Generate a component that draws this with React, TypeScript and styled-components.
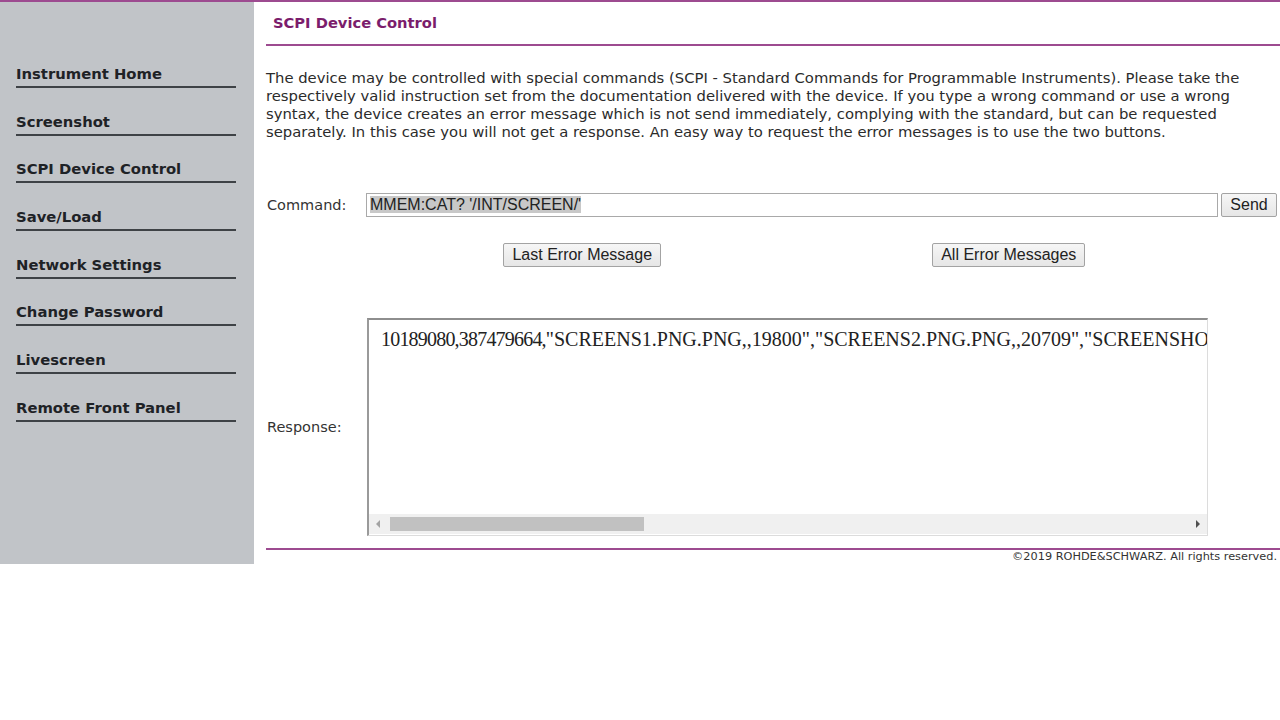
import React from "react"
import styled, { createGlobalStyle } from "styled-components"

const purple = "#9d4b90"

const GlobalStyle = createGlobalStyle`
  html, body {
    margin: 0;
    padding: 0;
    background: #ffffff;
  }
  body {
    font-family: "DejaVu Sans", Verdana, sans-serif;
    color: #2f2f2f;
  }
`

const Page = styled.div`
  display: flex;
  border-top: 2px solid ${purple};
`

const Sidebar = styled.nav`
  width: 254px;
  flex-shrink: 0;
  background: #c1c4c8;
  padding-top: 63px;
  box-sizing: border-box;
`

const NavItem = styled.a`
  display: block;
  width: 220px;
  margin-left: 16px;
  margin-bottom: 24.7px;
  padding-bottom: 3px;
  border-bottom: 2px solid #3e4246;
  font-size: 14.8px;
  line-height: 18px;
  font-weight: bold;
  color: #1e2226;
  text-decoration: none;
  white-space: nowrap;
`

const Main = styled.main`
  flex: 1;
  padding-left: 12px;
`

const Title = styled.h1`
  margin: 0;
  height: 44px;
  box-sizing: border-box;
  padding: 12px 0 0 7px;
  border-bottom: 2px solid ${purple};
  font-size: 14.7px;
  line-height: 18px;
  font-weight: bold;
  color: #7b1d6c;
`

const Intro = styled.p`
  margin: 23px 0 0;
  padding-right: 20px;
  font-size: 14.8px;
  line-height: 18px;
  color: #2b2b2b;
`

const CommandRow = styled.div`
  display: grid;
  grid-template-columns: 100px 1fr auto;
  align-items: center;
  margin-top: 52px;
  padding-right: 3px;
`

const Label = styled.span`
  padding-left: 1px;
  font-size: 14.5px;
  color: #333;
`

const Field = styled.div`
  height: 24px;
  box-sizing: border-box;
  border: 1px solid #a9a9a9;
  background: #fff;
  padding: 1px 3px;
  font-family: "Liberation Sans", Arial, sans-serif;
  font-size: 16px;
  line-height: 20px;
  color: #222;
  white-space: nowrap;
  overflow: hidden;
`

const Selected = styled.span`
  background: #c8c8c8;
`

const Button = styled.button`
  height: 24px;
  padding: 0 8px;
  border: 1px solid #a3a3a3;
  border-radius: 2px;
  background: linear-gradient(#f6f6f6, #e6e6e6);
  font-family: "Liberation Sans", Arial, sans-serif;
  font-size: 16px;
  color: #222;
  cursor: pointer;
`

const SendButton = styled(Button)`
  margin-left: 3px;
  width: 56px;
  padding: 0;
`

const ErrorButtons = styled.div`
  display: grid;
  grid-template-columns: 1fr 1fr;
  justify-items: center;
  margin-top: 26px;
  padding: 0 58px 0 103px;
`

const ResponseRow = styled.div`
  display: grid;
  grid-template-columns: 101px 841px;
  align-items: center;
  margin-top: 51px;
`

const ResponseBox = styled.div`
  height: 218px;
  box-sizing: border-box;
  display: flex;
  flex-direction: column;
  border-style: solid;
  border-width: 2px 1px 1px 2px;
  border-color: #8e8e8e #dcdcdc #dcdcdc #9a9a9a;
  background: #fff;
`

const ResponseText = styled.div`
  flex: 1;
  overflow: hidden;
  white-space: nowrap;
  padding: 8px 0 0 12px;
  font-family: "Liberation Serif", "Times New Roman", serif;
  font-size: 20px;
  line-height: 22px;
  color: #222;
`

const Digits = styled.span`
  letter-spacing: -0.8px;
`

const ScrollBar = styled.div`
  height: 20px;
  margin-bottom: 1px;
  display: flex;
  align-items: center;
  background: #f0f0f0;
`

const Arrow = styled.span<{ $dir: "left" | "right"; $active?: boolean }>`
  width: 18px;
  height: 20px;
  display: flex;
  align-items: center;
  justify-content: center;
  &::before {
    content: "";
    border-top: 4px solid transparent;
    border-bottom: 4px solid transparent;
    ${p =>
      p.$dir === "left"
        ? `border-right: 4px solid ${p.$active ? "#505050" : "#a3a3a3"};`
        : `border-left: 4px solid ${p.$active ? "#505050" : "#a3a3a3"};`}
  }
`

const Track = styled.div`
  flex: 1;
  height: 100%;
  display: flex;
  align-items: center;
`

const Thumb = styled.div`
  height: 14px;
  margin-left: 3px;
  background: #c1c1c1;
`

const FooterLine = styled.div`
  margin-top: 12px;
  border-top: 2px solid ${purple};
`

const Copyright = styled.div`
  padding: 0 3px 0 0;
  text-align: right;
  font-size: 11.3px;
  line-height: 14px;
  color: #333;
`

const navItems = [
  "Instrument Home",
  "Screenshot",
  "SCPI Device Control",
  "Save/Load",
  "Network Settings",
  "Change Password",
  "Livescreen",
  "Remote Front Panel",
]

const response =
  '"SCREENS1.PNG.PNG,,19800","SCREENS2.PNG.PNG,,20709","SCREENSHOT.PNG,,19652","SCREENSHOT1.PNG,,20187","SCREENSHOT2.PNG,,20411"'

export default function App() {
  return (
    <>
      <GlobalStyle />
      <Page>
        <Sidebar>
          {navItems.map(item => (
            <NavItem key={item} href="#">
              {item}
            </NavItem>
          ))}
        </Sidebar>
        <Main>
          <Title>SCPI Device Control</Title>
          <Intro>
            The device may be controlled with special commands (SCPI - Standard
            Commands for Programmable Instruments). Please take the respectively
            valid instruction set from the documentation delivered with the
            device. If you type a wrong command or use a wrong syntax, the device
            creates an error message which is not send immediately, complying with
            the standard, but can be requested separately. In this case you will
            not get a response. An easy way to request the error messages is to
            use the two buttons.
          </Intro>
          <CommandRow>
            <Label>Command:</Label>
            <Field>
              <Selected>MMEM:CAT? '/INT/SCREEN/'</Selected>
            </Field>
            <SendButton>Send</SendButton>
          </CommandRow>
          <ErrorButtons>
            <Button>Last Error Message</Button>
            <Button>All Error Messages</Button>
          </ErrorButtons>
          <ResponseRow>
            <Label>Response:</Label>
            <ResponseBox>
              <ResponseText>
                <Digits>10189080,387479664,</Digits>
                {response}
              </ResponseText>
              <ScrollBar>
                <Arrow $dir="left" />
                <Track>
                  <Thumb style={{ width: 254 }} />
                </Track>
                <Arrow $dir="right" $active />
              </ScrollBar>
            </ResponseBox>
          </ResponseRow>
          <FooterLine />
          <Copyright>©2019 ROHDE&amp;SCHWARZ. All rights reserved.</Copyright>
        </Main>
      </Page>
    </>
  )
}
